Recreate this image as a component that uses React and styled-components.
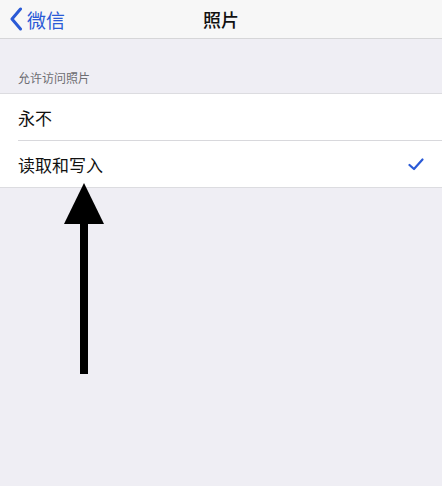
import React from "react";
import styled, { createGlobalStyle } from "styled-components";

const Global = createGlobalStyle`
  body {
    margin: 0;
    background: #efeff4;
    font-family: "Noto Sans CJK SC", "Liberation Sans", sans-serif;
  }
`;

const Screen = styled.div`
  position: relative;
  width: 442px;
  height: 486px;
  background: #efeef4;
  overflow: hidden;
`;

const NavBar = styled.header`
  height: 38px;
  background: #f7f7f7;
  border-bottom: 1px solid #d6d6d8;
  display: flex;
  align-items: center;
  position: relative;
`;

const Back = styled.div`
  display: flex;
  align-items: center;
  gap: 4px;
  padding-left: 9px;
  color: #2a5ad6;
  font-size: 19px;
  line-height: 1;
`;

const Title = styled.div`
  position: absolute;
  left: 0;
  right: 0;
  text-align: center;
  font-size: 18px;
  font-weight: 500;
  color: #111;
  pointer-events: none;
`;

const SectionHeader = styled.div`
  padding: 30px 0 6px 18px;
  font-size: 12px;
  color: #6d6d72;
  line-height: 18px;
`;

const Group = styled.ul`
  list-style: none;
  margin: 0;
  padding: 0;
  background: #fff;
  border-top: 1px solid #dcdce0;
  border-bottom: 1px solid #dcdce0;
`;

const Row = styled.li`
  height: 46px;
  display: flex;
  align-items: center;
  justify-content: space-between;
  margin-left: 18px;
  padding-right: 18px;
  font-size: 17px;
  color: #111;
  border-top: ${(p) => (p.first ? "none" : "1px solid #d8d8dc")};
`;

const Arrow = styled.svg`
  position: absolute;
  left: 62px;
  top: 183px;
`;

const Chevron = () => (
  <svg width="14" height="24" viewBox="0 0 14 24">
    <path d="M11.5 2 L3 12 L11.5 22" fill="none" stroke="#2a5ad6" strokeWidth="3" strokeLinecap="round" strokeLinejoin="round" />
  </svg>
);

const Check = () => (
  <svg width="16" height="13" viewBox="0 0 16 13">
    <path d="M1.5 7 L6 11 L14.5 1.5" fill="none" stroke="#2a5ad6" strokeWidth="2.2" strokeLinecap="round" strokeLinejoin="round" />
  </svg>
);

export default function App() {
  return (
    <Screen>
      <Global />
      <NavBar>
        <Back>
          <Chevron />
          <span>微信</span>
        </Back>
        <Title>照片</Title>
      </NavBar>
      <SectionHeader>允许访问照片</SectionHeader>
      <Group>
        <Row first>永不</Row>
        <Row>
          <span>读取和写入</span>
          <Check />
        </Row>
      </Group>
      <Arrow width="44" height="195" viewBox="0 0 44 195">
        <polygon points="22,0 2,41 42,41" fill="#000" />
        <rect x="18" y="38" width="8" height="153" fill="#000" />
      </Arrow>
    </Screen>
  );
}
